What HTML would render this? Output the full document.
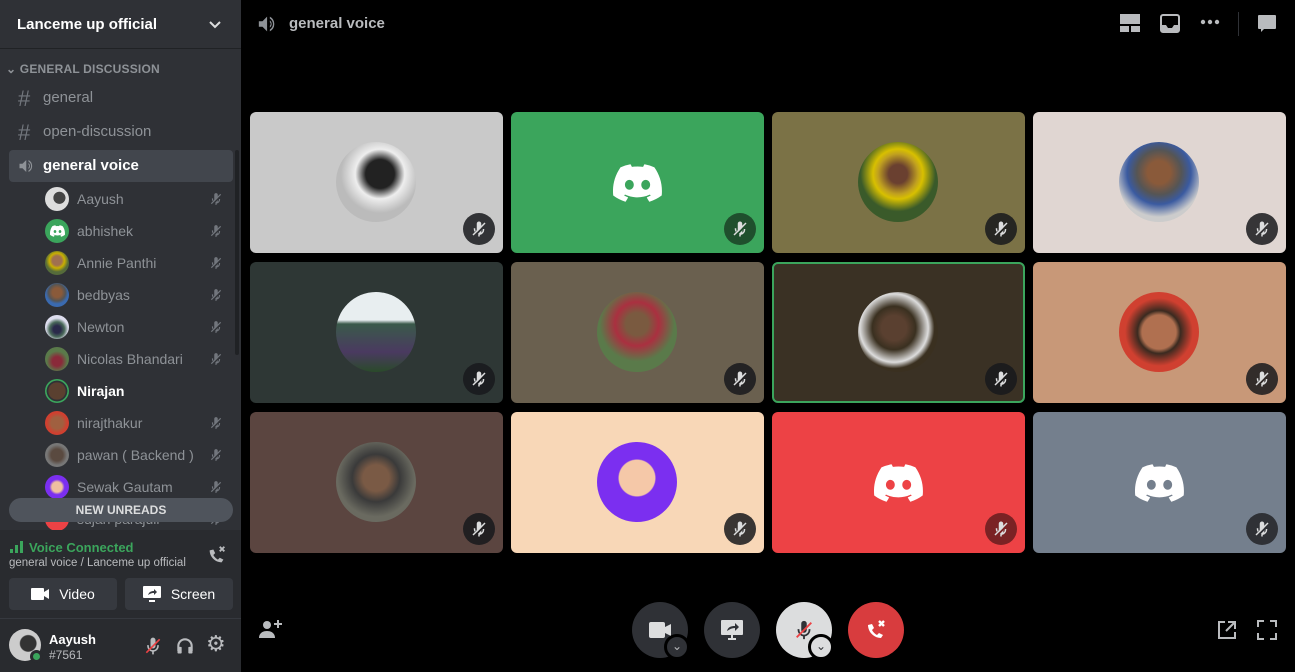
<!DOCTYPE html>
<html><head><meta charset="utf-8"><style>
*{margin:0;padding:0;box-sizing:border-box}
body{width:1295px;height:672px;background:#000;font-family:"Liberation Sans",sans-serif;position:relative;overflow:hidden}
.abs{position:absolute}
#side{left:0;top:0;width:241px;height:672px;background:#2f3136}
.mem{position:absolute;left:45px;height:24px;display:flex;align-items:center;color:#8e9297;font-size:14px}
.mem .av{width:24px;height:24px;border-radius:50%;margin-right:8px;flex:none}
.mic{position:absolute;left:209px;width:14px;height:16px}
.tile{position:absolute;width:253px;height:141px;border-radius:6px;overflow:hidden}
.tile .c{position:absolute;left:86px;top:30px;width:80px;height:80px;border-radius:50%}
.tile .m{position:absolute;right:8px;bottom:8px;width:32px;height:32px;border-radius:50%;background:rgba(24,25,28,.85);display:flex;align-items:center;justify-content:center;color:#dcddde}
.btn{position:absolute;width:56px;height:56px;border-radius:50%;display:flex;align-items:center;justify-content:center}
</style></head><body>
<svg width="0" height="0" style="position:absolute"><defs>
<symbol id="clyde" viewBox="0 0 71 55"><path fill="#fff" d="M60.1 4.9A58.5 58.5 0 0045.6.4a.2.2 0 00-.2.1 40.8 40.8 0 00-1.8 3.7 54 54 0 00-16.2 0A37.4 37.4 0 0025.5.5a.2.2 0 00-.2-.1 58.4 58.4 0 00-14.5 4.5.2.2 0 00-.1.1C1.5 18.7-1 32.200.3 45.5v.1a58.8 58.8 0 0017.7 9 .2.2 0 00.3-.1 42 42 0 003.6-5.9.2.2 0 00-.1-.3 38.8 38.8 0 01-5.5-2.6.2.2 0 010-.4l1.1-.9a.2.2 0 01.2 0 42 42 0 0035.6 0 .2.2 0 01.2 0l1.1.9a.2.2 0 010 .4 36.4 36.4 0 01-5.5 2.6.2.2 0 00-.1.3 47.2 47.2 0 003.6 5.9.2.2 0 00.3.1 58.6 58.6 0 0017.7-9 .2.2 0 00.1-.1c1.5-15.4-2.5-28.8-10.6-40.6a.2.2 0 00-.1-.1zM23.7 37.3c-3.5 0-6.4-3.2-6.4-7.2s2.8-7.2 6.4-7.2c3.6 0 6.5 3.3 6.4 7.2 0 4-2.8 7.200-6.4 7.2zm23.7 0c-3.5 0-6.4-3.2-6.4-7.2s2.8-7.2 6.4-7.2c3.6 0 6.5 3.3 6.4 7.2 0 4-2.8 7.2-6.4 7.2z"/></symbol>
<symbol id="mute" viewBox="0 0 24 24"><path fill="currentColor" d="M9 5a3 3 0 016 0v5.5L9 16.5A3 3 0 019 15zM15.5 13.5l-5 5A3 3 0 0015 15zM5 11h2v1a5 5 0 00.6 2.4l-1.4 1.4A7 7 0 015 12zM11 19.9V22h2v-2.1a7 7 0 006-6.9v-1h-2v1a5 5 0 01-5.6 5z"/><path stroke="currentColor" stroke-width="2" d="M20 4L4 20"/></symbol>
</defs></svg>

<div id="side" class="abs">
 <div class="abs" style="left:0;top:0;width:241px;height:49px;border-bottom:1px solid #202225"></div>
 <div class="abs" style="left:17px;top:16px;color:#fff;font-weight:bold;font-size:15px">Lanceme up official</div>
 <svg class="abs" style="left:208px;top:18px" width="14" height="14" viewBox="0 0 14 14"><path d="M2 4l5 5 5-5" stroke="#dcddde" stroke-width="2" fill="none"/></svg>
 <div class="abs" style="left:6px;top:62px;color:#8e9297;font-size:12px;font-weight:bold;letter-spacing:.2px">⌄ GENERAL DISCUSSION</div>
 <div class="abs" style="left:18px;top:86px;color:#72767d;font-size:22px">#</div>
 <div class="abs" style="left:43px;top:89px;color:#8e9297;font-size:15px">general</div>
 <div class="abs" style="left:18px;top:120px;color:#72767d;font-size:22px">#</div>
 <div class="abs" style="left:43px;top:123px;color:#8e9297;font-size:15px">open-discussion</div>
 <div class="abs" style="left:9px;top:150px;width:224px;height:32px;border-radius:4px;background:#42464d"></div>
 <svg class="abs" style="left:18px;top:157px" width="18" height="18" viewBox="0 0 24 24"><path fill="#8e9297" d="M11 4L6 9H2v6h4l5 5zM14 8a5 5 0 010 8v-2a3 3 0 000-4zM14 4a9 9 0 010 16v-2a7 7 0 000-12z"/></svg>
 <div class="abs" style="left:43px;top:157px;color:#fff;font-size:15px;font-weight:bold">general voice</div>

 <div class="mem" style="top:187px"><div class="av" style="background:radial-gradient(circle at 60% 45%,#444 30%,#ddd 32%)"></div>Aayush</div>
 <div class="mem" style="top:219px"><div class="av" style="background:#3ba55c;display:flex;align-items:center;justify-content:center"><svg width="15" height="12"><use href="#clyde"/></svg></div>abhishek</div>
 <div class="mem" style="top:251px"><div class="av" style="background:radial-gradient(circle at 50% 40%,#a07050 25%,#c9b000 40%,#556b3a 60%)"></div>Annie Panthi</div>
 <div class="mem" style="top:283px"><div class="av" style="background:radial-gradient(circle at 50% 40%,#8a5a3a 25%,#555 45%,#3a6ab0 60%)"></div>bedbyas</div>
 <div class="mem" style="top:315px"><div class="av" style="background:radial-gradient(circle at 50% 60%,#2a2a4a 20%,#4a6a5a 40%,#dde 60%)"></div>Newton</div>
 <div class="mem" style="top:347px"><div class="av" style="background:radial-gradient(circle at 50% 60%,#8a2a3a 25%,#5a7a4a 55%)"></div>Nicolas Bhandari</div>
 <div class="mem" style="top:379px;color:#fff;font-weight:bold"><div class="av" style="background:radial-gradient(circle,#5a4030 50%,#2f3136 52%,#2f3136 60%,#3ba55c 62%)"></div>Nirajan</div>
 <div class="mem" style="top:411px"><div class="av" style="background:radial-gradient(circle at 50% 50%,#a06040 35%,#d04030 60%)"></div>nirajthakur</div>
 <div class="mem" style="top:443px"><div class="av" style="background:radial-gradient(circle at 50% 50%,#5a4a40 35%,#777 60%)"></div>pawan ( Backend )</div>
 <div class="mem" style="top:475px"><div class="av" style="background:radial-gradient(circle at 50% 50%,#f0c0a0 30%,#7b2ff0 45%)"></div>Sewak Gautam</div>
 <div class="mem" style="top:507px"><div class="av" style="background:#ed4245"></div>sujan parajuli</div>
 <svg class="mic" style="top:191px;color:#72767d" viewBox="0 0 24 24"><use href="#mute"/></svg>
 <svg class="mic" style="top:223px;color:#72767d" viewBox="0 0 24 24"><use href="#mute"/></svg>
 <svg class="mic" style="top:255px;color:#72767d" viewBox="0 0 24 24"><use href="#mute"/></svg>
 <svg class="mic" style="top:287px;color:#72767d" viewBox="0 0 24 24"><use href="#mute"/></svg>
 <svg class="mic" style="top:319px;color:#72767d" viewBox="0 0 24 24"><use href="#mute"/></svg>
 <svg class="mic" style="top:351px;color:#72767d" viewBox="0 0 24 24"><use href="#mute"/></svg>
 <svg class="mic" style="top:415px;color:#72767d" viewBox="0 0 24 24"><use href="#mute"/></svg>
 <svg class="mic" style="top:447px;color:#72767d" viewBox="0 0 24 24"><use href="#mute"/></svg>
 <svg class="mic" style="top:479px;color:#72767d" viewBox="0 0 24 24"><use href="#mute"/></svg>
 <svg class="mic" style="top:511px;color:#72767d" viewBox="0 0 24 24"><use href="#mute"/></svg>
 <div class="abs" style="left:235px;top:150px;width:4px;height:205px;border-radius:2px;background:#202225"></div>
 <div class="abs" style="left:9px;top:498px;width:224px;height:24px;border-radius:12px;background:#4f545c;color:#dcddde;font-size:12px;font-weight:bold;text-align:center;line-height:24px">NEW UNREADS</div>

 <div class="abs" style="left:0;top:530px;width:241px;height:142px;background:#292b2f"></div>
 <svg class="abs" style="left:10px;top:541px" width="14" height="12" viewBox="0 0 14 12"><rect x="0" y="8" width="3" height="4" fill="#3ba55c"/><rect x="5" y="4" width="3" height="8" fill="#3ba55c"/><rect x="10" y="0" width="3" height="12" fill="#3ba55c"/></svg>
 <div class="abs" style="left:29px;top:540px;color:#3ba55c;font-size:13px;font-weight:bold">Voice Connected</div>
 <div class="abs" style="left:9px;top:557px;color:#b9bbbe;font-size:11.5px">general voice / Lanceme up official</div>
 <svg class="abs" style="left:206px;top:544px" width="22" height="22" viewBox="0 0 24 24"><path fill="#b9bbbe" d="M4 7c0 7 6 13 13 13l2-3-4-2-2 2c-2-1-4-3-5-5l2-2-2-4z"/><path stroke="#b9bbbe" stroke-width="2" d="M15 3l5 5M20 3l-5 5"/></svg>
 <div class="abs" style="left:9px;top:578px;width:108px;height:32px;border-radius:4px;background:#36393f;color:#fff;font-size:14px;display:flex;align-items:center;justify-content:center;gap:10px"><svg width="18" height="12" viewBox="0 0 18 12"><rect width="13" height="12" rx="1" fill="#fff"/><path d="M13 4l5-3v10l-5-3z" fill="#fff"/></svg>Video</div>
 <div class="abs" style="left:125px;top:578px;width:108px;height:32px;border-radius:4px;background:#36393f;color:#fff;font-size:14px;display:flex;align-items:center;justify-content:center;gap:10px"><svg width="18" height="16" viewBox="0 0 18 16"><rect width="18" height="12" rx="1" fill="#fff"/><path d="M6 15h6" stroke="#fff" stroke-width="2"/><path d="M5 9c1-3 3-4 6-4V3l3 3-3 3V7c-3 0-4 1-6 2z" fill="#36393f"/></svg>Screen</div>
 <div class="abs" style="left:0;top:618px;width:241px;height:1px;background:#36393f"></div>
 <div class="abs" style="left:9px;top:629px;width:32px;height:32px;border-radius:50%;background:radial-gradient(circle at 60% 45%,#333 30%,#ccc 34%)"></div>
 <div class="abs" style="left:30px;top:650px;width:13px;height:13px;border-radius:50%;background:#3ba55c;border:3px solid #292b2f"></div>
 <div class="abs" style="left:49px;top:632px;color:#fff;font-size:13px;font-weight:bold">Aayush</div>
 <div class="abs" style="left:49px;top:648px;color:#b9bbbe;font-size:12px">#7561</div>
 <svg class="abs" style="left:143px;top:636px" width="20" height="20" viewBox="0 0 24 24"><path fill="#b9bbbe" d="M9 5a3 3 0 016 0v7a3 3 0 01-6 0zM5 11h2v1a5 5 0 0010 0v-1h2v1a7 7 0 01-6 6.9V22h-2v-3.1A7 7 0 015 12z"/><path stroke="#ed4245" stroke-width="2" d="M20 4L4 20"/></svg>
 <svg class="abs" style="left:175px;top:636px" width="20" height="20" viewBox="0 0 24 24"><path d="M4 18v-6a8 8 0 0116 0v6" stroke="#b9bbbe" stroke-width="2.5" fill="none"/><rect x="3" y="13" width="5" height="8" rx="1" fill="#b9bbbe"/><rect x="16" y="13" width="5" height="8" rx="1" fill="#b9bbbe"/></svg>
 <div class="abs" style="left:206px;top:631px;color:#b9bbbe;font-size:22px">⚙</div>
</div>

<!-- header -->
<svg class="abs" style="left:257px;top:13px" width="22" height="22" viewBox="0 0 24 24"><path fill="#8e9297" d="M11 4L6 9H2v6h4l5 5zM14 8a5 5 0 010 8v-2a3 3 0 000-4zM14 4a9 9 0 010 16v-2a7 7 0 000-12z"/></svg>
<div class="abs" style="left:289px;top:15px;color:#b9bbbe;font-size:15px;font-weight:bold">general voice</div>
<svg class="abs" style="left:1120px;top:14px" width="20" height="19" viewBox="0 0 20 19"><rect width="20" height="10" fill="#b9bbbe"/><rect y="12" width="9" height="6" fill="#b9bbbe"/><rect x="11" y="12" width="9" height="6" fill="#b9bbbe"/></svg>
<svg class="abs" style="left:1160px;top:14px" width="20" height="19" viewBox="0 0 20 19"><rect x="1" y="1" width="18" height="17" rx="2" stroke="#b9bbbe" stroke-width="2" fill="none"/><path d="M1 11h5l2 3h4l2-3h5v7H1z" fill="#b9bbbe"/></svg>
<svg class="abs" style="left:1200px;top:19px" width="20" height="6" viewBox="0 0 20 6"><circle cx="3" cy="3" r="2.2" fill="#b9bbbe"/><circle cx="10" cy="3" r="2.2" fill="#b9bbbe"/><circle cx="17" cy="3" r="2.2" fill="#b9bbbe"/></svg>
<div class="abs" style="left:1238px;top:12px;width:1px;height:24px;background:#2f3136"></div>
<svg class="abs" style="left:1257px;top:14px" width="20" height="20" viewBox="0 0 20 20"><path d="M2 1h16a1 1 0 011 1v12a1 1 0 01-1 1H7l-3 3v-3H2a1 1 0 01-1-1V2a1 1 0 011-1z" fill="#b9bbbe"/></svg>

<!-- tiles -->
<div class="tile" style="left:250px;top:112px;background:#c9c9c9"><div class="c" style="background:radial-gradient(circle at 55% 40%,#222 22%,#888 30%,#eee 38%,#bbb 60%)"></div><div class="m"><svg width="18" height="18"><use href="#mute"/></svg></div></div>
<div class="tile" style="left:511px;top:112px;background:#3ba55c"><svg class="abs" style="left:102px;top:52px" width="49" height="38"><use href="#clyde"/></svg><div class="m" style="background:#1f4f2d"><svg width="18" height="18"><use href="#mute"/></svg></div></div>
<div class="tile" style="left:772px;top:112px;background:#7b7246"><div class="c" style="background:radial-gradient(circle at 50% 40%,#6a4030 15%,#c0a020 32%,#d8c000 40%,#3a5a2a 60%)"></div><div class="m"><svg width="18" height="18"><use href="#mute"/></svg></div></div>
<div class="tile" style="left:1033px;top:112px;background:#e0d6d2"><div class="c" style="background:radial-gradient(circle at 50% 38%,#8a5a3a 18%,#555 35%,#3a5aa0 50%,#ccc 70%)"></div><div class="m"><svg width="18" height="18"><use href="#mute"/></svg></div></div>
<div class="tile" style="left:250px;top:262px;background:#2e3735"><div class="c" style="background:linear-gradient(#e8eef0 0 35%,#3a5a4a 40%,#4a3a60 75%,#2a4a2a)"></div><div class="m"><svg width="18" height="18"><use href="#mute"/></svg></div></div>
<div class="tile" style="left:511px;top:262px;background:#6a604f"><div class="c" style="background:radial-gradient(circle at 50% 40%,#7a5a40 18%,#aa3040 35%,#5a7a4a 60%)"></div><div class="m"><svg width="18" height="18"><use href="#mute"/></svg></div></div>
<div class="tile" style="left:772px;top:262px;background:#3a3124;border:2px solid #3ba55c"><div class="c" style="left:84px;top:28px;background:radial-gradient(circle at 45% 45%,#5a4030 20%,#3a3020 35%,#ddd 55%,#3a3020 65%)"></div><div class="m" style="right:6px;bottom:6px"><svg width="18" height="18"><use href="#mute"/></svg></div></div>
<div class="tile" style="left:1033px;top:262px;background:#c89878"><div class="c" style="background:radial-gradient(circle at 50% 50%,#b07050 30%,#3a2a20 38%,#d04030 60%)"></div><div class="m"><svg width="18" height="18"><use href="#mute"/></svg></div></div>
<div class="tile" style="left:250px;top:412px;background:#5b4540"><div class="c" style="background:radial-gradient(circle at 50% 45%,#7a5a45 22%,#3a3a3a 40%,#6a6a60 65%)"></div><div class="m"><svg width="18" height="18"><use href="#mute"/></svg></div></div>
<div class="tile" style="left:511px;top:412px;background:#f8d7b7"><div class="c" style="background:radial-gradient(circle at 50% 45%,#f5c8a8 30%,#7b2ff0 32%)"></div><div class="m"><svg width="18" height="18"><use href="#mute"/></svg></div></div>
<div class="tile" style="left:772px;top:412px;background:#ed4245"><svg class="abs" style="left:102px;top:52px" width="49" height="38"><use href="#clyde"/></svg><div class="m" style="background:#7a2224"><svg width="18" height="18"><use href="#mute"/></svg></div></div>
<div class="tile" style="left:1033px;top:412px;background:#747f8d"><svg class="abs" style="left:102px;top:52px" width="49" height="38"><use href="#clyde"/></svg><div class="m" style="background:#2f3136"><svg width="18" height="18"><use href="#mute"/></svg></div></div>

<!-- bottom controls -->
<svg class="abs" style="left:259px;top:618px" width="24" height="22" viewBox="0 0 24 22"><circle cx="8" cy="7" r="4" fill="#b9bbbe"/><path d="M0 20c0-5 4-7 8-7s8 2 8 7z" fill="#b9bbbe"/><path d="M19 2v8M15 6h8" stroke="#b9bbbe" stroke-width="2"/></svg>
<div class="btn" style="left:632px;top:602px;background:#2f3136"><svg width="22" height="16" viewBox="0 0 22 16"><rect width="16" height="16" rx="2" fill="#dcddde"/><path d="M16 5l6-3v12l-6-3z" fill="#dcddde"/></svg></div>
<div class="abs" style="left:664px;top:634px;width:26px;height:26px;border-radius:50%;background:#2f3136;border:3px solid #000;color:#b9bbbe;font-size:12px;text-align:center;line-height:18px">⌄</div>
<div class="btn" style="left:704px;top:602px;background:#2f3136"><svg width="22" height="20" viewBox="0 0 22 20"><rect width="22" height="15" rx="1" fill="#dcddde"/><path d="M7 19h8M11 15v4" stroke="#dcddde" stroke-width="2"/><path d="M6 11c1-4 4-5 8-5V3l4 4-4 4V8c-3 0-5 1-8 3z" fill="#2f3136"/></svg></div>
<div class="btn" style="left:776px;top:602px;background:#dcddde"><svg width="22" height="22" viewBox="0 0 24 24"><path fill="#2f3136" d="M9 5a3 3 0 016 0v7a3 3 0 01-6 0zM5 11h2v1a5 5 0 0010 0v-1h2v1a7 7 0 01-6 6.9V22h-2v-3.1A7 7 0 015 12z"/><path stroke="#ed4245" stroke-width="2" d="M20 4L4 20"/></svg></div>
<div class="abs" style="left:808px;top:634px;width:26px;height:26px;border-radius:50%;background:#dcddde;border:3px solid #000;color:#2f3136;font-size:12px;text-align:center;line-height:18px">⌄</div>
<div class="btn" style="left:848px;top:602px;background:#d83c3e"><svg width="24" height="24" viewBox="0 0 24 24"><path fill="#fff" d="M4 7c0 7 6 13 13 13l2-3-4-2-2 2c-2-1-4-3-5-5l2-2-2-4z"/><path stroke="#fff" stroke-width="2.4" d="M15 3l5 5M20 3l-5 5"/></svg></div>
<svg class="abs" style="left:1217px;top:620px" width="20" height="20" viewBox="0 0 20 20"><path d="M8 2H2v16h16v-6" stroke="#b9bbbe" stroke-width="2" fill="none"/><path d="M11 2h7v7M18 2l-9 9" stroke="#b9bbbe" stroke-width="2" fill="none"/></svg>
<svg class="abs" style="left:1257px;top:620px" width="20" height="20" viewBox="0 0 20 20"><path d="M1 7V1h6M13 1h6v6M19 13v6h-6M7 19H1v-6" stroke="#b9bbbe" stroke-width="2" fill="none"/></svg>
</body></html>
